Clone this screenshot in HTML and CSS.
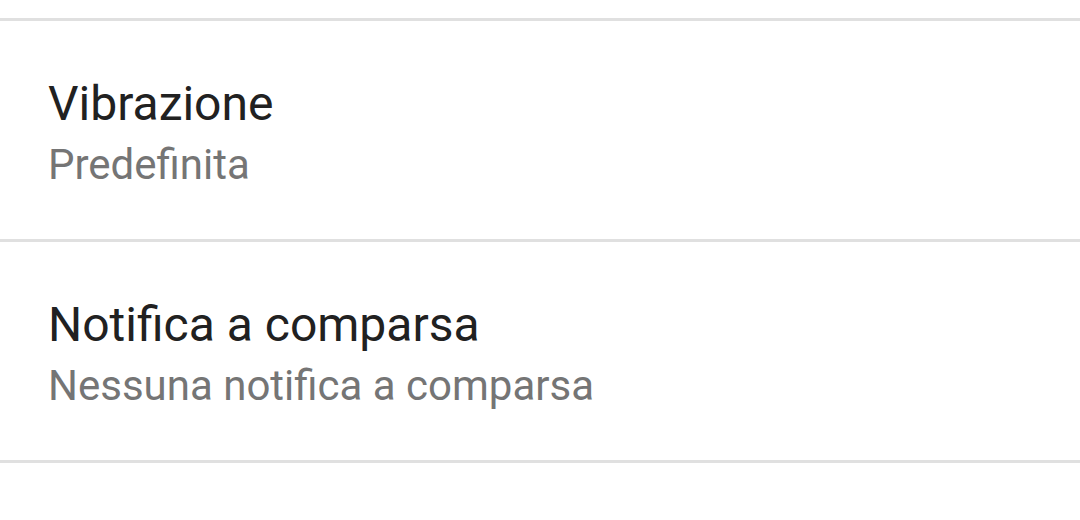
FILE: index.html
```html
<!DOCTYPE html>
<html lang="it">
<head>
    <meta charset="UTF-8">
    <meta name="viewport" content="width=device-width, initial-scale=1.0">
    <title>Notifiche</title>
    <link rel="stylesheet" href="styles.css">
</head>
<body>
<div class="pref-list">
    <div class="pref-item">
        <div class="pref-title">Vibrazione</div>
        <div class="pref-summary">Predefinita</div>
    </div>
    <div class="pref-item">
        <div class="pref-title">Notifica a comparsa</div>
        <div class="pref-summary">Nessuna notifica a comparsa</div>
    </div>
</div>
</body>
</html>
```

FILE: styles.css
```css
* {
    box-sizing: border-box;
}

body {
    margin: 0;
    background-color: #ffffff;
    font-family: Roboto, "Noto Sans", sans-serif;
}

.pref-list {
    padding-top: 18px;
}

.pref-item {
    height: 221px;
    padding: 51px 48px 0 48px;
    border-top: 3px solid #e0e0e0;
}

.pref-item:last-child {
    border-bottom: 3px solid #e0e0e0;
    height: 224px;
}

.pref-title {
    font-size: 48px;
    line-height: 64px;
    color: #212121;
}

.pref-summary {
    font-size: 42px;
    line-height: 58px;
    color: #757575;
}
```
